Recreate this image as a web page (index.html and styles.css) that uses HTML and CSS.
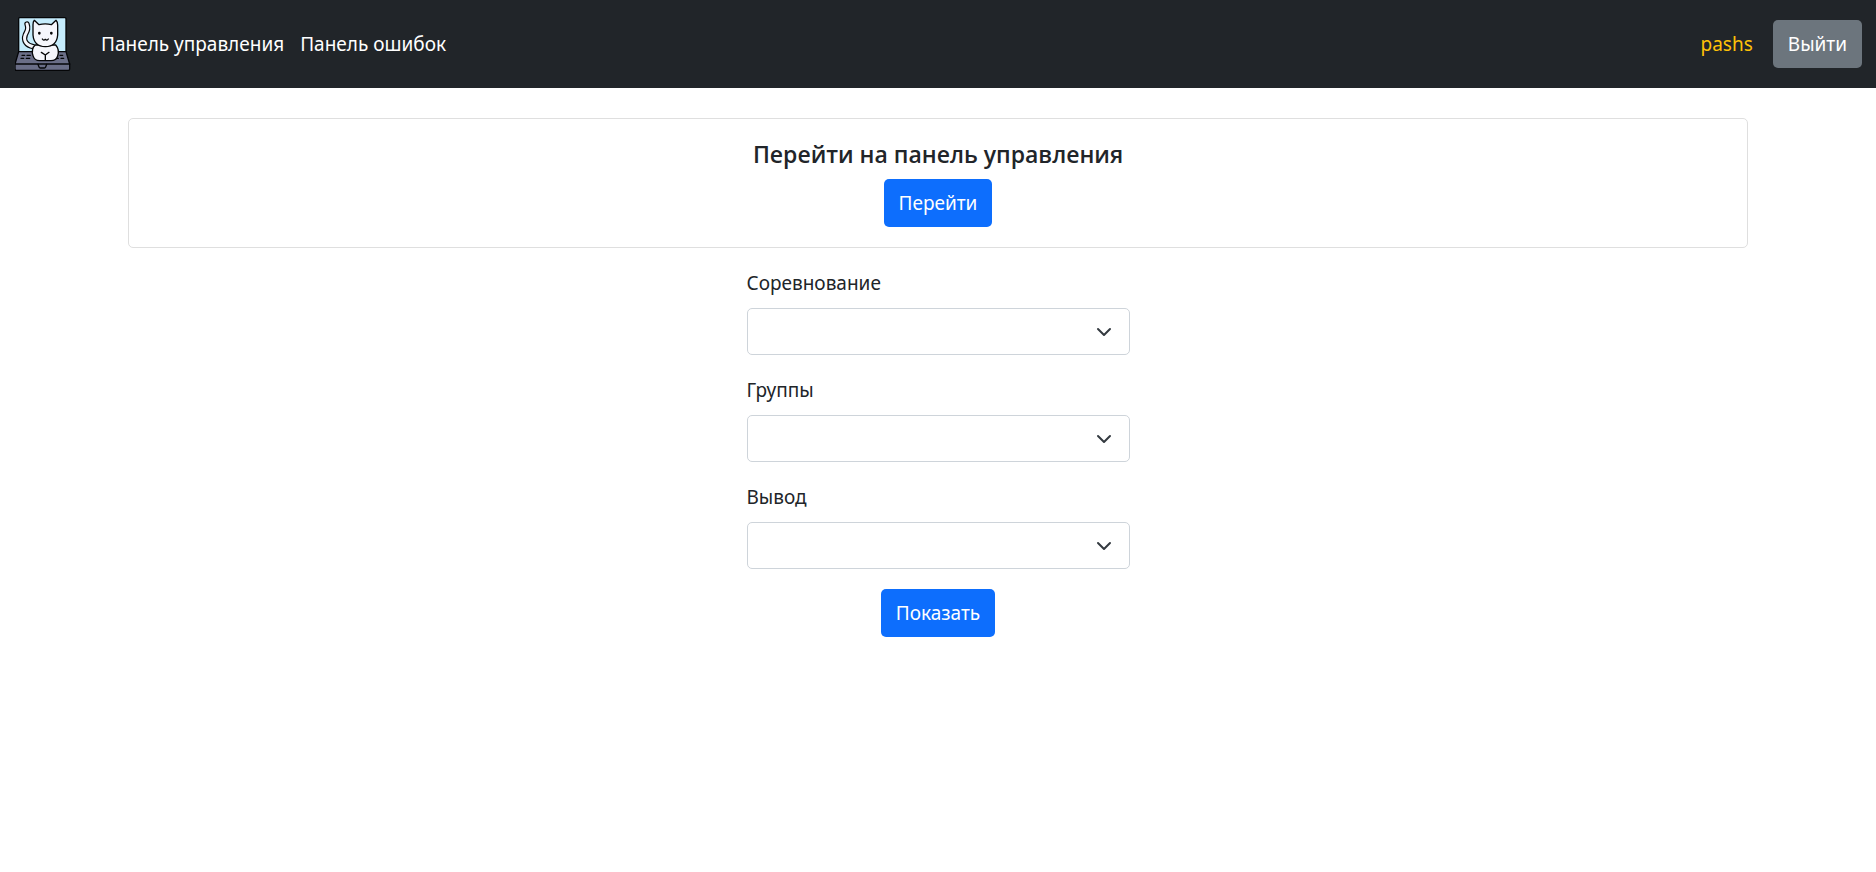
FILE: index.html
```html
<!DOCTYPE html>
<html lang="ru">
<head>
<meta charset="utf-8">
<meta name="viewport" content="width=device-width, initial-scale=1">
<title>Панель управления</title>
<link rel="stylesheet" href="styles.css">
</head>
<body>
<header class="navbar">
  <a class="brand" href="#" aria-label="Главная">
    <svg class="logo" viewBox="18 18 168 168" fill="none" stroke="#050608" stroke-width="4" stroke-linecap="round" stroke-linejoin="round" aria-hidden="true">
      <path d="M29 126V26q0-3 3-3H168q3 0 3 3V126z" fill="#c5ecfc"/>
      <path d="M29 125H171L182 162V177q0 4-4 4H22q-4 0-4-4V162z" fill="#6a6e87"/>
      <path d="M18 162H182"/>
      <path d="M87 163l3 8q1 3 4 3h12q3 0 4-3l3-8"/>
      <path d="M39 136h8M54 136h10M36 145h8M52 145h10M136 136h9M153 136h8M138 145h10M156 145h8"/>
      <path d="M73 110C52 106 42 92 49 74C55 62 59 56 54 42" stroke-width="16"/>
      <path d="M73 110C52 106 42 92 49 74C55 62 59 56 54 42" stroke="#f5f6fc" stroke-width="9"/>
      <path d="M79 105C70 111 68 125 72 137Q76 152 92 152H126Q142 152 146 138C150 126 148 114 140 105z" fill="#f5f6fc"/>
      <path d="M72 75V44Q72 35 76 31L90 44Q109 39 127 44L141 31Q146 36 146 45V75C144 98 130 110 109 110S74 98 72 75z" fill="#f5f6fc"/>
      <path d="M97 127L109 135L120 127M109 135V151"/>
      <path d="M100 87q4 6 9 1q5 5 9-1"/>
      <path d="M91 69v1M127 69v1" stroke-width="8"/>
    </svg>
  </a>
  <nav class="menu">
    <a class="menu-link" href="#">Панель управления</a>
    <a class="menu-link" href="#">Панель ошибок</a>
  </nav>
  <div class="account">
    <span class="user">pashs</span>
    <button class="btn btn-secondary" type="button">Выйти</button>
  </div>
</header>
<main class="container">
  <section class="card">
    <h1 class="card-title">Перейти на панель управления</h1>
    <a class="btn btn-primary" href="#">Перейти</a>
  </section>
  <form class="filter">
    <div class="field">
      <label for="contest">Соревнование</label>
      <div class="select-box">
        <select id="contest"><option></option></select>
        <svg class="chevron" viewBox="0 0 16 16" aria-hidden="true"><path d="M2 5l6 6 6-6"/></svg>
      </div>
    </div>
    <div class="field">
      <label for="groups">Группы</label>
      <div class="select-box">
        <select id="groups"><option></option></select>
        <svg class="chevron" viewBox="0 0 16 16" aria-hidden="true"><path d="M2 5l6 6 6-6"/></svg>
      </div>
    </div>
    <div class="field">
      <label for="output">Вывод</label>
      <div class="select-box">
        <select id="output"><option></option></select>
        <svg class="chevron" viewBox="0 0 16 16" aria-hidden="true"><path d="M2 5l6 6 6-6"/></svg>
      </div>
    </div>
    <button class="btn btn-primary" type="button">Показать</button>
  </form>
</main>
</body>
</html>
```
FILE: styles.css
```css
*, *::before, *::after { box-sizing: border-box; }
body {
  margin: 0;
  background: #fff;
  color: #212529;
  font-family: "Segoe UI", "Noto Sans", "Open Sans", sans-serif;
  font-size: 19px;
  line-height: 30px;
}
.navbar {
  display: flex;
  align-items: center;
  padding: 15px 14px 15px 15px;
  min-height: 88px;
  background: #212529;
}
.brand { display: flex; margin-right: 30px; }
.logo { width: 56px; height: 56px; }
.menu { display: flex; flex: 1; gap: 16px; }
.menu-link { padding: 10px 0; color: #fff; text-decoration: none; }
.account { display: flex; align-items: center; gap: 20px; }
.user { color: #ffc107; }
.btn {
  display: inline-block;
  padding: 8px 14px;
  border: 1px solid transparent;
  border-radius: 5px;
  color: #fff;
  font: inherit;
  text-decoration: none;
  cursor: pointer;
}
.btn-primary { background: #0d6efd; }
.btn-secondary { background: #6c757d; }
.container { max-width: 1650px; margin: 30px auto; padding: 0 15px; }
.card {
  display: flex;
  flex-direction: column;
  align-items: center;
  gap: 10px;
  padding: 20px;
  border: 1px solid #dfdfdf;
  border-radius: 5px;
}
.card-title { margin: 0; font-family: "Segoe UI", "Open Sans", "Noto Sans", sans-serif; font-size: 23px; font-weight: 600; line-height: 30px; }
.filter {
  display: flex;
  flex-direction: column;
  align-items: center;
  gap: 20px;
  max-width: 383px;
  margin: 20px auto 0;
}
.field { display: flex; flex-direction: column; gap: 10px; width: 100%; }
.select-box { display: grid; align-items: center; }
.select-box > * { grid-area: 1 / 1; }
.select-box select {
  appearance: none;
  width: 100%;
  height: 47px;
  padding: 8px 45px 8px 15px;
  border: 1px solid #ced4da;
  border-radius: 5px;
  background: #fff;
  color: #212529;
  font: inherit;
}
.chevron {
  justify-self: end;
  width: 16px;
  height: 16px;
  margin-right: 18px;
  fill: none;
  stroke: #343a40;
  stroke-width: 2;
  stroke-linecap: round;
  stroke-linejoin: round;
  pointer-events: none;
}
```
